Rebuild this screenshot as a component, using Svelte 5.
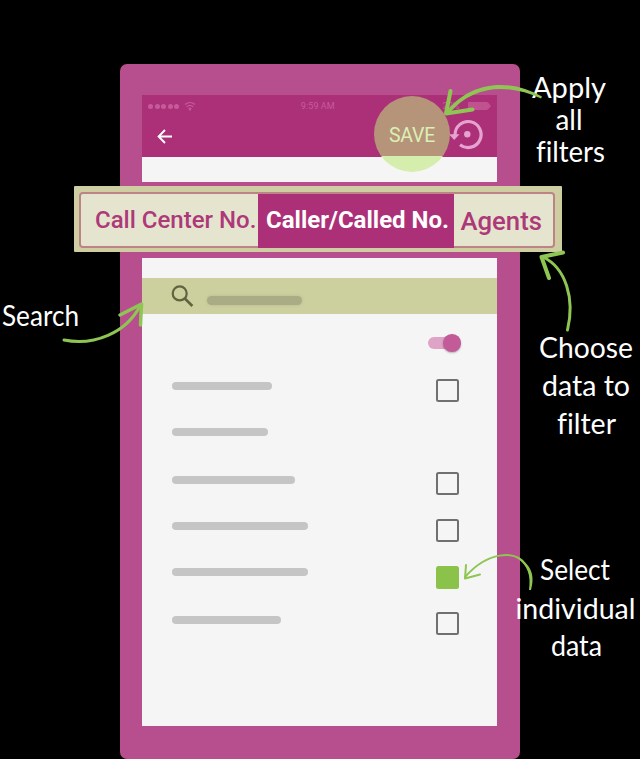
<script>
  const rows = [
    { bar: 100, lineY: 3, box: 'open' },
    { bar: 96, lineY: 2, box: 'none' },
    { bar: 122.5, lineY: 4, box: 'open' },
    { bar: 135.5, lineY: 3, box: 'open' },
    { bar: 135.5, lineY: 2, box: 'checked' },
    { bar: 109, lineY: 3.5, box: 'open' }
  ];
  const notes = [
    { text: 'Apply', x: 532, y: 98, w: 74 },
    { text: 'all', x: 555.5, y: 129.5, w: 27 },
    { text: 'filters', x: 536, y: 161.5, w: 69 },
    { text: 'Search', x: 2, y: 325.5, w: 77 },
    { text: 'Choose', x: 539, y: 358, w: 94 },
    { text: 'data to', x: 542, y: 396, w: 88 },
    { text: 'filter', x: 557, y: 433.5, w: 59 },
    { text: 'Select', x: 540, y: 580, w: 70 },
    { text: 'individual', x: 515.5, y: 618.5, w: 120 },
    { text: 'data', x: 551, y: 656, w: 51 }
  ];
</script>

<main>
  <section class="phone">
    <div class="screen">
      <header>
        <div class="status">
          <div class="signal">
            {#each Array(5) as _}<i></i>{/each}
            <svg width="12" height="10" viewBox="0 0 12 10" fill="none" stroke="currentColor" stroke-width="1.2">
              <path d="M1 3.5Q6-.5 11 3.5M2.8 5.7Q6 3 9.2 5.7M4.5 7.6Q6 6.4 7.5 7.6" /><circle cx="6" cy="8.6" r=".5" />
            </svg>
          </div>
          <span class="clock">9:59 AM</span>
          <span class="charge">22%</span>
          <svg class="battery" width="23" height="8" viewBox="0 0 23 8"><path d="M1 0H19Q21 1 23 4Q21 7 19 8H1Q0 8 0 7V1Q0 0 1 0Z" fill="currentColor" /></svg>
        </div>
        <div class="actions">
          <svg width="16" height="15" viewBox="0 0 16 15" fill="none" stroke="#fff" stroke-width="1.9"><path d="M8 1 1.6 7.5 8 14M1.6 7.5H15" /></svg>
          <svg class="restore" width="34" height="32" viewBox="0 0 34 32">
            <path d="M6.1 16A13 13 0 1 1 11 25.7" fill="none" stroke="#e6a3cf" stroke-width="3.2" />
            <path d="M0 15.2H10.5L5.2 21Z" fill="#e6a3cf" /><circle cx="18.3" cy="15.3" r="3.2" fill="#e6a3cf" />
          </svg>
        </div>
      </header>
      <div class="tab-band"></div>
      <div class="search">
        <svg width="23" height="23" viewBox="0 0 23 23" fill="none" stroke="#62633f" stroke-width="2.2"><circle cx="8.7" cy="8.4" r="7" /><path d="m13.8 13.5 7.6 7.5" stroke-width="2.6" /></svg>
        <span></span>
      </div>
      <div class="toggle-row"><div class="toggle"></div></div>
      <div class="list">
        {#each rows as row}
          <div class="row">
            <span class="bar" style:width="{row.bar}px" style:margin-top="{row.lineY}px"></span>
            {#if row.box !== 'none'}<span class="box {row.box}"></span>{/if}
          </div>
        {/each}
      </div>
    </div>
  </section>

  <nav>
    <div class="tabs">
      <div class="tab first">Call Center No.</div>
      <div class="tab active">Caller/Called No.</div>
      <div class="tab last">Agents</div>
    </div>
  </nav>

  <div class="save">SAVE</div>

  <svg class="overlay" width="640" height="759" viewBox="0 0 640 759">
    <g class="notes">
      {#each notes as n}
        <text x={n.x} y={n.y} textLength={n.w} lengthAdjust="spacingAndGlyphs">{n.text}</text>
      {/each}
    </g>
    <g class="arrows">
      <path d="M542 96.5C507 77 469 82 445 113L449 113.5C473 85 507 83 541 98.5Z" />
      <path class="line" d="M450.5 91 446 113.5 472.5 109.5" stroke-width="4" />
      <path class="line" d="M567.5 330C575 299 566 268 543 257" stroke-width="3" />
      <path class="line" d="M549 278 541.5 257 563 252.5" stroke-width="4" />
      <path class="line" d="M64 340C94 346 126 333 140 306" stroke-width="3" />
      <path class="line" d="M120 315 141.5 304 140.5 325" stroke-width="3.5" />
      <path class="line" d="M465 577C487 552 515 549 526 565" stroke-width="2" />
      <path d="M519 558C533 566 534.5 578 531 590H529C531 575 528 566 517 558Z" />
      <path class="line" d="M466 565 465 578.5 480 574.5" stroke-width="2" />
    </g>
  </svg>
</main>

<style>
  :global(body) { margin: 0; background: #000; }
  main { position: relative; width: 640px; height: 759px; overflow: hidden; background: #000; display: flex; justify-content: center; padding-top: 64px; box-sizing: border-box; font-family: Roboto, sans-serif; }
  .phone { box-sizing: border-box; width: 400px; height: 695px; padding: 31px 23.5px 0 22px; background: #b74e8e; border-radius: 7px; }
  .screen { height: 631px; background: #f5f5f5; overflow: hidden; }
  header { height: 61.5px; background: #ac3078; }
  .status { display: flex; height: 22px; align-items: center; color: #c55c99; padding: 0 6px; font-size: 9px; }
  .signal { display: flex; align-items: center; gap: 1.6px; width: 153px; }
  .signal i { width: 5px; height: 5px; border-radius: 50%; background: currentColor; }
  .signal svg { margin-left: 3px; }
  .clock { width: 142px; letter-spacing: .1px; }
  .charge { width: 21px; }
  .battery { margin-left: 4px; color: #c0528f; }
  .actions { display: flex; align-items: center; justify-content: space-between; height: 38px; padding: 0 13.5px 0 14.5px; }
  .actions > svg:first-child { margin-top: 1px; }
  .restore { margin-top: -2px; }
  .tab-band { height: 76px; margin-top: 25.5px; background: #b74e8e; }
  .search { display: flex; align-items: center; gap: 13px; height: 36px; margin-top: 20px; padding-left: 28.5px; background: #cccf9e; }
  .search span { width: 95px; height: 9px; margin-top: 8px; border-radius: 5px; background: #a9ac85; box-shadow: 0 0 3px #a7aa8388; }
  .toggle-row { display: flex; justify-content: flex-end; padding: 20px 36px 0 0; height: 41px; box-sizing: border-box; }
  .toggle { display: flex; justify-content: flex-end; align-items: center; width: 32.5px; height: 12px; margin-top: 3px; border-radius: 6px; background: #dfa3c6; }
  .toggle::after { content: ''; width: 17.5px; height: 17.5px; border-radius: 50%; background: #c25b98; box-shadow: 0 1px 2px #0004; }
  .list { padding: 24px 38px 0 30px; }
  .row { display: flex; justify-content: space-between; align-items: flex-start; height: 46.7px; }
  .bar { height: 8px; border-radius: 4px; background: #c5c5c5; }
  .box { box-sizing: border-box; width: 23px; height: 23px; border: 2px solid #707070; border-radius: 2.5px; }
  .checked { border: 0; background: #8bc34a; }
  nav { position: absolute; left: 74px; top: 186px; width: 488px; height: 66px; box-sizing: border-box; padding: 6px 7px 4px 5px; background: #cfcea3; border-radius: 1px; }
  .tabs { display: flex; height: 56px; box-sizing: border-box; border: 2px solid #bc8484; border-radius: 4px; background: #e5e5cf; }
  .tab { box-sizing: border-box; white-space: nowrap; color: #ad3979; font-size: 24px; line-height: 53px; font-weight: 500; }
  .first { width: 177px; padding-left: 14px; letter-spacing: 0; }
  .active { width: 196px; height: 54px; padding-left: 8px; font-weight: 700; background: #ac3078; color: #fff; }
  .last { padding-left: 6.5px; font-size: 25.7px; line-height: 55px; }
  .save { position: absolute; left: 374px; top: 96px; width: 76px; height: 76px; border-radius: 50%; display: flex; align-items: center; justify-content: center; padding-top: 3px; box-sizing: border-box; background: linear-gradient(#b69479 0 60.5px, #d5eead 60.5px); color: #daf0b4; font-size: 19.5px; letter-spacing: -.2px; }
  .overlay { position: absolute; inset: 0; }
  .notes { fill: #fff; font-family: Lato, sans-serif; font-size: 29px; font-variant-ligatures: none; }
  .arrows { fill: #8fc653; stroke: none; }
  .line { fill: none; stroke: #8fc653; stroke-linecap: round; stroke-linejoin: round; }
</style>
